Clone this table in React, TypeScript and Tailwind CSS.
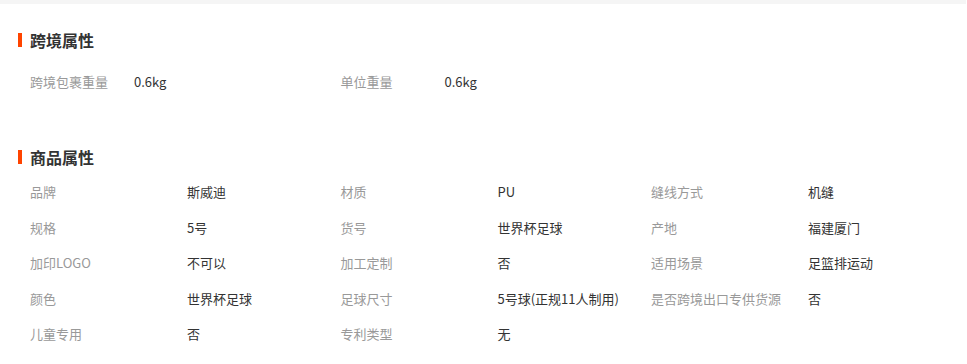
import React from "react"

type Attr = { label: string; value: string }

const crossBorder: Attr[] = [
	{ label: "跨境包裹重量", value: "0.6kg" },
	{ label: "单位重量", value: "0.6kg" },
]

const product: Attr[] = [
	{ label: "品牌", value: "斯威迪" },
	{ label: "材质", value: "PU" },
	{ label: "缝线方式", value: "机缝" },
	{ label: "规格", value: "5号" },
	{ label: "货号", value: "世界杯足球" },
	{ label: "产地", value: "福建厦门" },
	{ label: "加印LOGO", value: "不可以" },
	{ label: "加工定制", value: "否" },
	{ label: "适用场景", value: "足篮排运动" },
	{ label: "颜色", value: "世界杯足球" },
	{ label: "足球尺寸", value: "5号球(正规11人制用)" },
	{ label: "是否跨境出口专供货源", value: "否" },
	{ label: "儿童专用", value: "否" },
	{ label: "专利类型", value: "无" },
]

function SectionTitle({ children }: { children: React.ReactNode }) {
	return (
		<div className="flex items-center gap-2 h-6">
			<span className="w-1 h-[14px] bg-[#ff4400]" />
			<h3 className="text-[16px] font-bold text-[#333] leading-6">{children}</h3>
		</div>
	)
}

export default function App() {
	return (
		<div
			className="w-[967px] bg-white"
			style={{ fontFamily: '"Noto Sans CJK SC", "Noto Sans", sans-serif' }}
		>
			<div className="h-1 w-[966px] bg-[#f5f5f5]" />

			<section className="pl-[18px] pt-6">
				<SectionTitle>跨境属性</SectionTitle>
				<div className="mt-3 pl-3 grid grid-cols-[repeat(3,310.5px)]">
					{crossBorder.map((a) => (
						<div key={a.label} className="flex items-center h-9 text-[13px]">
							<span className="w-[104px] text-[#999]">{a.label}</span>
							<span className="text-[#333]">{a.value}</span>
						</div>
					))}
				</div>
			</section>

			<section className="pl-[18px] mt-[45px]">
				<SectionTitle>商品属性</SectionTitle>
				<div className="mt-[5px] pl-3 grid grid-cols-[repeat(3,310.5px)]">
					{product.map((a) => (
						<div key={a.label} className="flex items-center h-[35.5px] text-[13px]">
							<span className="w-[157px] shrink-0 text-[#999]">{a.label}</span>
							<span className="text-[#333]">{a.value}</span>
						</div>
					))}
				</div>
			</section>
		</div>
	)
}
